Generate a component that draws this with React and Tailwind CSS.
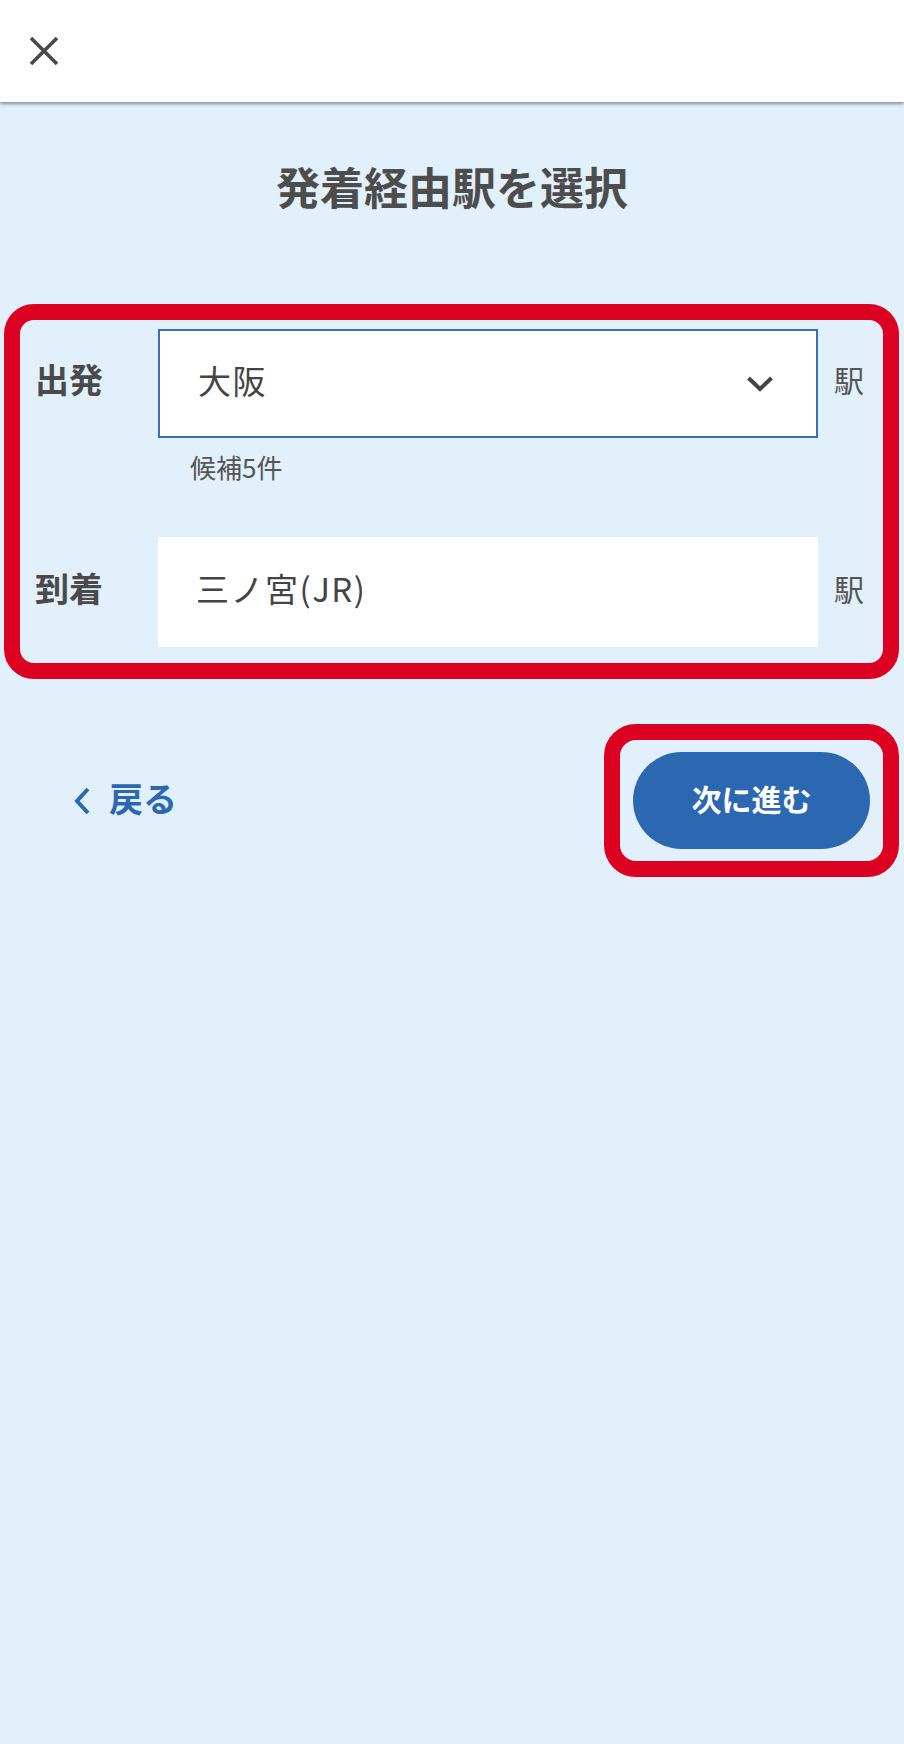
const FONT = "font-['Noto_Sans_CJK_JP','Noto_Sans',sans-serif]";

function CloseIcon() {
  return (
    <svg width="30" height="30" viewBox="0 0 30 30" className="block">
      <path d="M2 2 L28 28 M28 2 L2 28" stroke="#4a4a4a" strokeWidth="3.6" fill="none" />
    </svg>
  );
}

function ChevronDown() {
  return (
    <svg width="28" height="18" viewBox="0 0 28 18" className="block">
      <path d="M2.5 3 L14 14 L25.5 3" stroke="#444" strokeWidth="4" fill="none" strokeLinejoin="miter" />
    </svg>
  );
}

function ChevronLeft() {
  return (
    <svg width="18" height="28" viewBox="0 0 18 28" className="block">
      <path d="M15 2 L4 14 L15 26" stroke="#2c67b1" strokeWidth="4" fill="none" />
    </svg>
  );
}

export default function App() {
  return (
    <div className={`min-h-[1744px] bg-[#e1f0fa] text-[#4a4a4a] ${FONT}`}>
      {/* top bar */}
      <header className="relative h-[102px] bg-white flex items-center pl-[29px] shadow-[0_2px_3px_rgba(70,85,100,0.6)]">
        <CloseIcon />
      </header>

      <h1 className="mt-[53px] h-[62px] leading-[62px] text-center text-[44px] font-bold text-[#4d4d4d]">
        発着経由駅を選択
      </h1>

      {/* station form */}
      <div className="mt-[87px] ml-[4px] mr-[5px] border-[16px] border-[#dc0021] rounded-[30px] pt-[9px] pb-[16px]">
        <div className="flex items-center">
          <div className="w-[138px] pl-[15px] pb-[9px] text-[34px] font-bold leading-none">出発</div>
          <div className="w-[660px] h-[109px] bg-white border-2 border-[#3670b8] flex items-center justify-between pl-[38px] pr-[42px]">
            <span className="pb-[6px] text-[33px] tracking-[1.5px] text-[#444]">大阪</span>
            <ChevronDown />
          </div>
          <div className="pl-[16px] pb-[8px] text-[30px] text-[#555]">駅</div>
        </div>
        <div className="pl-[170px] mt-[11px] h-[35px] leading-[35px] text-[26px] text-[#555]">候補5件</div>
        <div className="mt-[53px] flex items-center">
          <div className="w-[138px] pl-[15px] pb-[9px] text-[34px] font-bold leading-none">到着</div>
          <div className="w-[660px] h-[110px] bg-white flex items-center pl-[38px]">
            <span className="pb-[6px] text-[33px] tracking-[1.5px] text-[#444]">三ノ宮(JR)</span>
          </div>
          <div className="pl-[16px] pb-[8px] text-[30px] text-[#555]">駅</div>
        </div>
      </div>

      {/* actions */}
      <div className="mt-[45px] mr-[5px] flex items-center justify-between">
        <button className="ml-[73px] flex items-center gap-[18px] text-[#2c67b1] text-[34px] font-bold">
          <ChevronLeft />
          <span className="pb-[6px] leading-none">戻る</span>
        </button>
        <div className="border-[16px] border-[#dc0021] rounded-[32px] px-[13px] py-[12px]">
          <button className="w-[237px] h-[97px] pb-[4px] rounded-full bg-[#2c67b1] text-white text-[30px] font-bold">
            次に進む
          </button>
        </div>
      </div>
    </div>
  );
}
